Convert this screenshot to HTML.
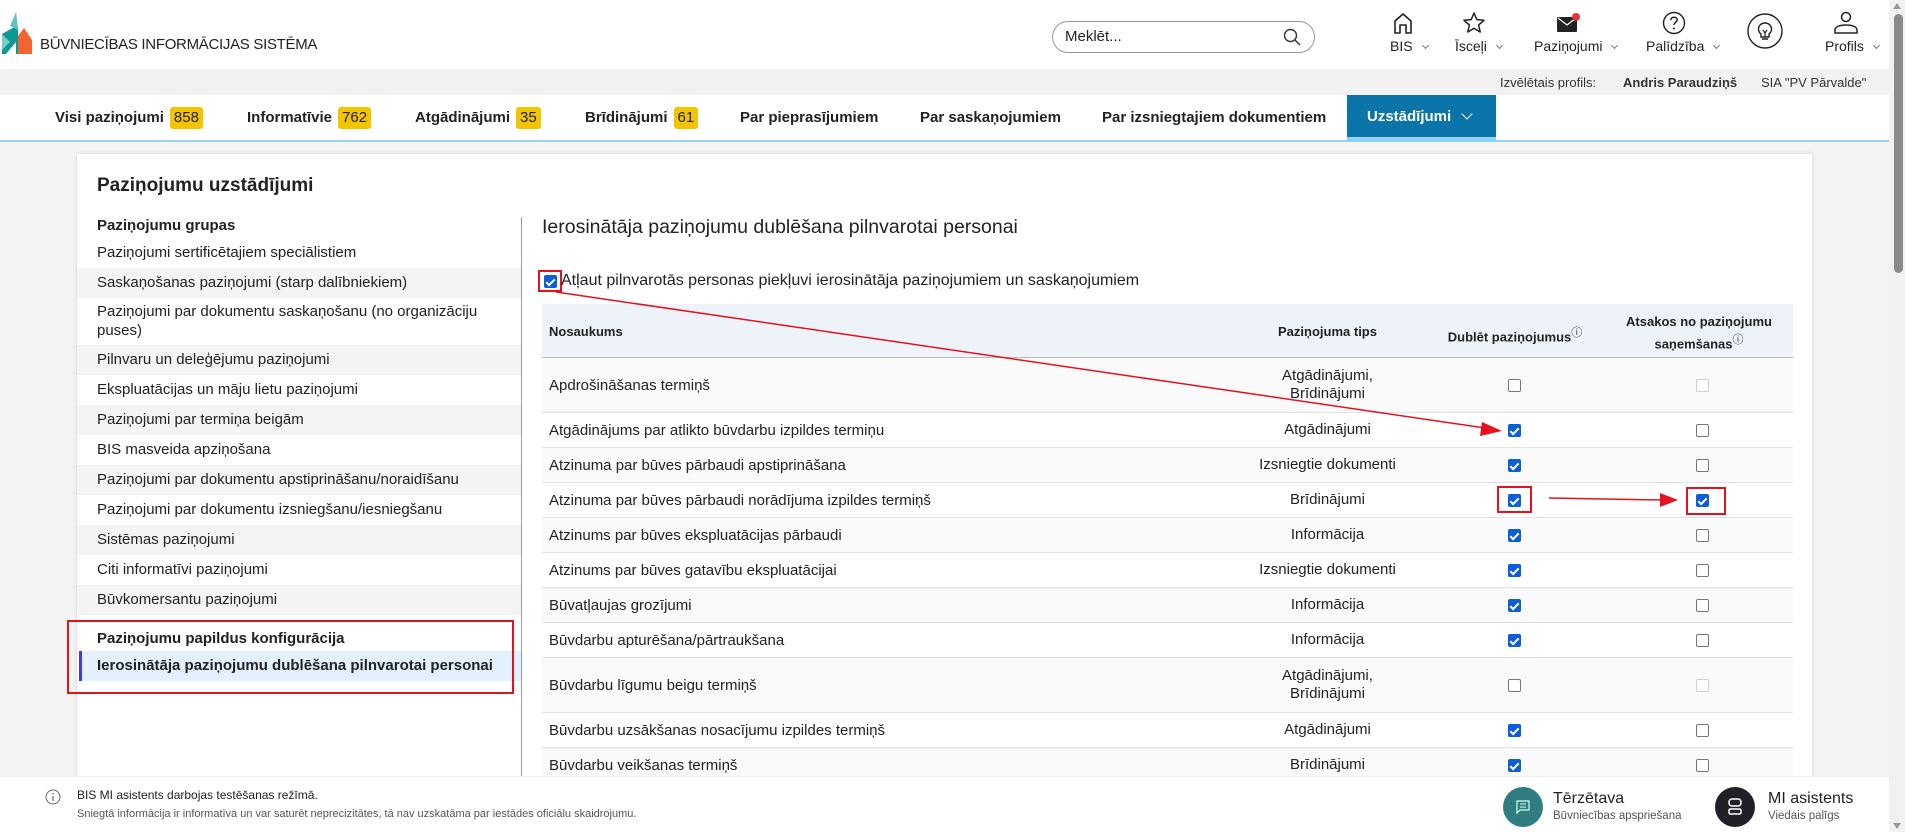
<!DOCTYPE html>
<html style="width:1905px;height:832px;overflow:hidden"><head><meta charset="utf-8">
<style>
*{box-sizing:border-box;margin:0;padding:0}
body{width:1905px;height:832px;overflow:hidden;position:relative;background:#f4f4f4;font-family:"Liberation Sans",Arial,sans-serif;color:#222}
.a{position:absolute}
.hdr{left:0;top:0;width:1889px;height:69px;background:#fff}
.strip{left:0;top:69px;width:1889px;height:26px;background:#f2f2f2;font-size:13px;color:#333}
.tabs{left:0;top:95px;width:1889px;height:47px;background:#fff;border-bottom:2px solid #9fd3ee}
.tab{position:absolute;top:0;height:45px;line-height:45px;font-size:15px;font-weight:bold;color:#222;white-space:nowrap}
.badge{display:inline-block;background:#f2c500;border-radius:3px;padding:0 4px;height:22px;line-height:22px;margin-left:6px;font-weight:normal;font-size:15px}
.nav{position:absolute;top:0;text-align:center;font-size:14px;color:#222}
.nav .lbl{position:absolute;top:38px;white-space:nowrap}
.chev{display:inline-block;width:5px;height:5px;border-right:1px solid #777;border-bottom:1px solid #777;transform:rotate(45deg);margin-left:10px;position:relative;top:-3px}
.card{left:77px;top:154px;width:1735px;height:678px;background:#fff;box-shadow:0 0 4px rgba(0,0,0,.15)}
.si{position:absolute;left:77px;width:444px;padding-left:20px;font-size:15px;color:#222;line-height:30px;height:30px}
.g{background:#f4f4f4}
.row{position:absolute;left:542px;width:1251px;border-bottom:1px solid #e3e3e3;font-size:15px;color:#222}
.row .n{position:absolute;left:7px;top:0;height:100%;display:flex;align-items:center}
.row .t{position:absolute;left:688px;width:195px;top:0;height:100%;display:flex;align-items:center;justify-content:center;text-align:center;line-height:18px}
.cb{position:absolute;width:13px;height:13px;border-radius:2px}
.on{background:#0b5ed7}
.on::after{content:"";position:absolute;left:4px;top:1.5px;width:3px;height:7px;border-right:2px solid #fff;border-bottom:2px solid #fff;transform:rotate(45deg)}
.off{background:#fff;border:1px solid #767676}
.dis{background:#fff;border:1px solid #cfcfcf}
.odd{background:#fafafa}
.rb{position:absolute;border:2px solid #e3121b}
</style></head><body>

<div class="a hdr">
  <svg class="a" style="left:2px;top:12px" width="30" height="42" viewBox="0 0 30 42">
    <polygon points="14,0 14,14 0,22 0,42 4,42 14,30 14,42 16,42 16,18" fill="#0e9a94"/>
    <polygon points="14,0 16,18 8,14" fill="#5fc4bf"/>
    <polygon points="0,22 8,30 0,38" fill="#78cfca"/>
    <polygon points="16,16 16,42 30,42 30,28 22,16" fill="#f26430"/>
    <polygon points="16,16 22,16 16,24" fill="#fff"/>
  </svg>
  <div class="a" style="left:40px;top:36px;font-size:15px;letter-spacing:-0.3px;color:#222;white-space:nowrap">BŪVNIECĪBAS INFORMĀCIJAS SISTĒMA</div>
  <div class="a" style="left:1052px;top:21px;width:263px;height:32px;border:1px solid #999;border-radius:16px;font-size:15px;line-height:30px;padding-left:12px;color:#222">Meklēt...</div>
  <svg class="a" style="left:1283px;top:28px" width="18" height="18" viewBox="0 0 18 18"><circle cx="7.5" cy="7.5" r="6" fill="none" stroke="#333" stroke-width="1.4"/><line x1="12" y1="12" x2="17" y2="17" stroke="#333" stroke-width="1.4"/></svg>

  <svg class="a" style="left:1392px;top:12px" width="22" height="22" viewBox="0 0 22 22"><path d="M3 21V9L11 2L19 9V21H14V13H8V21Z" fill="none" stroke="#222" stroke-width="1.6" stroke-linejoin="round"/></svg>
  <div class="nav" style="left:1390px"><span class="lbl" style="left:0">BIS<span class="chev"></span></span></div>
  <svg class="a" style="left:1462px;top:11px" width="24" height="24" viewBox="0 0 24 24"><path d="M12 2L14.8 8.6L22 9.3L16.6 14L18.2 21L12 17.3L5.8 21L7.4 14L2 9.3L9.2 8.6Z" fill="none" stroke="#222" stroke-width="1.5" stroke-linejoin="round"/></svg>
  <div class="nav" style="left:1455px"><span class="lbl" style="left:0">Īsceļi<span class="chev"></span></span></div>
  <svg class="a" style="left:1556px;top:12px" width="26" height="22" viewBox="0 0 26 22"><rect x="1" y="5" width="20" height="15" rx="1" fill="#222"/><path d="M2 6L11 13L20 6" fill="none" stroke="#fff" stroke-width="1.2"/><circle cx="20" cy="5" r="4" fill="#e0323f"/></svg>
  <div class="nav" style="left:1534px"><span class="lbl" style="left:0">Paziņojumi<span class="chev"></span></span></div>
  <svg class="a" style="left:1662px;top:11px" width="24" height="24" viewBox="0 0 24 24"><circle cx="12" cy="12" r="10.5" fill="none" stroke="#222" stroke-width="1.4"/><path d="M8.8 9.2C8.8 7.3 10.2 6.2 12 6.2C13.8 6.2 15.2 7.3 15.2 9C15.2 11 12 11.3 12 14" fill="none" stroke="#222" stroke-width="1.5"/><circle cx="12" cy="17.5" r="1" fill="#222"/></svg>
  <div class="nav" style="left:1646px"><span class="lbl" style="left:0">Palīdzība<span class="chev"></span></span></div>
  <svg class="a" style="left:1747px;top:13px" width="36" height="36" viewBox="0 0 36 36"><circle cx="18" cy="18" r="17" fill="none" stroke="#222" stroke-width="1.4"/><path d="M14 21C12 19.5 11.5 17.5 11.5 16C11.5 12.5 14.5 10 18 10C21.5 10 24.5 12.5 24.5 16C24.5 17.5 24 19.5 22 21V24H14Z M15 26H21" fill="none" stroke="#222" stroke-width="1.4"/><path d="M16 17L18 20L20 17M18 20V24" fill="none" stroke="#222" stroke-width="1.2"/></svg>
  <svg class="a" style="left:1833px;top:11px" width="26" height="24" viewBox="0 0 26 24"><circle cx="13" cy="6" r="4.5" fill="none" stroke="#222" stroke-width="1.5"/><path d="M2 22V19C2 16 6 14 13 14C20 14 24 16 24 19V22Z" fill="none" stroke="#222" stroke-width="1.5"/></svg>
  <div class="nav" style="left:1825px"><span class="lbl" style="left:0">Profils<span class="chev"></span></span></div>
</div>

<div class="a strip">
  <span class="a" style="left:1500px;top:6px">Izvēlētais profils:</span>
  <span class="a" style="left:1623px;top:6px;font-weight:bold">Andris Paraudziņš</span>
  <span class="a" style="left:1761px;top:6px">SIA "PV Pārvalde"</span>
</div>

<div class="a tabs">
  <div class="tab" style="left:55px">Visi paziņojumi<span class="badge">858</span></div>
  <div class="tab" style="left:247px">Informatīvie<span class="badge">762</span></div>
  <div class="tab" style="left:415px">Atgādinājumi<span class="badge">35</span></div>
  <div class="tab" style="left:585px">Brīdinājumi<span class="badge">61</span></div>
  <div class="tab" style="left:740px">Par pieprasījumiem</div>
  <div class="tab" style="left:920px">Par saskaņojumiem</div>
  <div class="tab" style="left:1102px">Par izsniegtajiem dokumentiem</div>
  <div class="tab" style="left:1347px;width:149px;background:#0b75aa;color:#fff;padding-left:20px;border-bottom:5px solid #8ed3f5;height:47px;line-height:43px">Uzstādījumi<span class="chev" style="border-color:#fff;width:8px;height:8px;margin-left:12px"></span></div>
</div>

<div class="a card"></div>
<div class="a" style="left:97px;top:175px;font-size:19px;font-weight:bold;color:#222">Paziņojumu uzstādījumi</div>
<div class="a" style="left:521px;top:217px;width:1px;height:560px;background:#999"></div>

<div class="a" style="left:97px;top:217px;font-size:15px;font-weight:bold">Paziņojumu grupas</div>
<div class="si" style="top:238px">Paziņojumi sertificētajiem speciālistiem</div>
<div class="si g" style="top:268px">Saskaņošanas paziņojumi (starp dalībniekiem)</div>
<div class="si" style="top:298px;height:47px;line-height:19px;padding-top:4px;padding-right:10px">Paziņojumi par dokumentu saskaņošanu (no organizāciju puses)</div>
<div class="si g" style="top:345px">Pilnvaru un deleģējumu paziņojumi</div>
<div class="si" style="top:375px">Ekspluatācijas un māju lietu paziņojumi</div>
<div class="si g" style="top:405px">Paziņojumi par termiņa beigām</div>
<div class="si" style="top:435px">BIS masveida apziņošana</div>
<div class="si g" style="top:465px">Paziņojumi par dokumentu apstiprināšanu/noraidīšanu</div>
<div class="si" style="top:495px">Paziņojumi par dokumentu izsniegšanu/iesniegšanu</div>
<div class="si g" style="top:525px">Sistēmas paziņojumi</div>
<div class="si" style="top:555px">Citi informatīvi paziņojumi</div>
<div class="si g" style="top:585px">Būvkomersantu paziņojumi</div>
<div class="a" style="left:97px;top:630px;font-size:15px;font-weight:bold">Paziņojumu papildus konfigurācija</div>
<div class="si" style="top:651px;left:79px;width:442px;background:#e3f0fd;border-left:3px solid #3b3be8;padding-left:15px;font-weight:bold">Ierosinātāja paziņojumu dublēšana pilnvarotai personai</div>
<div class="rb" style="left:67px;top:620px;width:447px;height:74px"></div>

<div class="a" style="left:542px;top:216px;font-size:19.5px;color:#222">Ierosinātāja paziņojumu dublēšana pilnvarotai personai</div>
<div class="cb on" style="left:544px;top:275px"></div>
<div class="rb" style="left:538px;top:270px;width:24px;height:22px"></div>
<div class="a" style="left:561px;top:272px;font-size:16px">Atļaut pilnvarotās personas piekļuvi ierosinātāja paziņojumiem un saskaņojumiem</div>

<div class="a" style="left:542px;top:304px;width:1251px;height:54px;background:#eef3fa;border-bottom:1px solid #bbb;font-size:13px;font-weight:bold">
  <span class="a" style="left:7px;top:20px">Nosaukums</span>
  <span class="a" style="left:688px;width:195px;top:20px;text-align:center">Paziņojuma tips</span>
  <span class="a" style="left:883px;width:180px;top:20px;text-align:center">Dublēt paziņojumus<sup style="font-weight:normal;font-size:11px">ⓘ</sup></span>
  <span class="a" style="left:1063px;width:188px;top:8px;text-align:center;line-height:19px">Atsakos no paziņojumu saņemšanas<sup style="font-weight:normal;font-size:11px">ⓘ</sup></span>
</div>

<div class="row odd" style="top:358px;height:55px"><span class="n">Apdrošināšanas termiņš</span><span class="t">Atgādinājumi,<br>Brīdinājumi</span><span class="cb off" style="left:966px;top:21px"></span><span class="cb dis" style="left:1154px;top:21px"></span></div>
<div class="row" style="top:413px;height:35px"><span class="n">Atgādinājums par atlikto būvdarbu izpildes termiņu</span><span class="t">Atgādinājumi</span><span class="cb on" style="left:966px;top:11px"></span><span class="cb off" style="left:1154px;top:11px"></span></div>
<div class="row odd" style="top:448px;height:35px"><span class="n">Atzinuma par būves pārbaudi apstiprināšana</span><span class="t">Izsniegtie dokumenti</span><span class="cb on" style="left:966px;top:11px"></span><span class="cb off" style="left:1154px;top:11px"></span></div>
<div class="row" style="top:483px;height:35px"><span class="n">Atzinuma par būves pārbaudi norādījuma izpildes termiņš</span><span class="t">Brīdinājumi</span><span class="cb on" style="left:966px;top:11px"></span><span class="cb on" style="left:1154px;top:11px"></span></div>
<div class="row odd" style="top:518px;height:35px"><span class="n">Atzinums par būves ekspluatācijas pārbaudi</span><span class="t">Informācija</span><span class="cb on" style="left:966px;top:11px"></span><span class="cb off" style="left:1154px;top:11px"></span></div>
<div class="row" style="top:553px;height:35px"><span class="n">Atzinums par būves gatavību ekspluatācijai</span><span class="t">Izsniegtie dokumenti</span><span class="cb on" style="left:966px;top:11px"></span><span class="cb off" style="left:1154px;top:11px"></span></div>
<div class="row odd" style="top:588px;height:35px"><span class="n">Būvatļaujas grozījumi</span><span class="t">Informācija</span><span class="cb on" style="left:966px;top:11px"></span><span class="cb off" style="left:1154px;top:11px"></span></div>
<div class="row" style="top:623px;height:35px"><span class="n">Būvdarbu apturēšana/pārtraukšana</span><span class="t">Informācija</span><span class="cb on" style="left:966px;top:11px"></span><span class="cb off" style="left:1154px;top:11px"></span></div>
<div class="row odd" style="top:658px;height:55px"><span class="n">Būvdarbu līgumu beigu termiņš</span><span class="t">Atgādinājumi,<br>Brīdinājumi</span><span class="cb off" style="left:966px;top:21px"></span><span class="cb dis" style="left:1154px;top:21px"></span></div>
<div class="row" style="top:713px;height:35px"><span class="n">Būvdarbu uzsākšanas nosacījumu izpildes termiņš</span><span class="t">Atgādinājumi</span><span class="cb on" style="left:966px;top:11px"></span><span class="cb off" style="left:1154px;top:11px"></span></div>
<div class="row odd" style="top:748px;height:35px"><span class="n">Būvdarbu veikšanas termiņš</span><span class="t">Brīdinājumi</span><span class="cb on" style="left:966px;top:11px"></span><span class="cb off" style="left:1154px;top:11px"></span></div>

<div class="rb" style="left:1497px;top:486px;width:35px;height:27px"></div>
<div class="rb" style="left:1686px;top:487px;width:40px;height:28px"></div>
<svg class="a" style="left:0;top:0" width="1905" height="832">
  <line x1="556" y1="292" x2="1485" y2="428" stroke="#e3121b" stroke-width="1.5"/>
  <polygon points="1502,431 1482,422 1480,436" fill="#e3121b"/>
  <line x1="1549" y1="498" x2="1662" y2="500" stroke="#e3121b" stroke-width="1.5"/>
  <polygon points="1678,500 1660,493 1660,507" fill="#e3121b"/>
</svg>

<div class="a" style="left:0;top:776px;width:1889px;height:56px;background:#fff;border-top:1px solid #eee">
  <svg class="a" style="left:45px;top:12px" width="16" height="16" viewBox="0 0 16 16"><circle cx="8" cy="8" r="7" fill="none" stroke="#666" stroke-width="1"/><line x1="8" y1="7" x2="8" y2="12" stroke="#666" stroke-width="1.2"/><circle cx="8" cy="4.5" r="0.8" fill="#666"/></svg>
  <div class="a" style="left:77px;top:11px;font-size:12px;color:#222">BIS MI asistents darbojas testēšanas režīmā.</div>
  <div class="a" style="left:77px;top:31px;font-size:11px;color:#555">Sniegtā informācija ir informatīva un var saturēt neprecizitātes, tā nav uzskatāma par iestādes oficiālu skaidrojumu.</div>
  <div class="a" style="left:1503px;top:10px;width:40px;height:40px;border-radius:50%;background:#2f7d80"></div>
  <svg class="a" style="left:1515px;top:22px" width="16" height="16" viewBox="0 0 16 16"><path d="M2 2H14V11H5L2 14Z" fill="none" stroke="#cfe" stroke-width="1.2"/><path d="M5 5H11M5 8H11" stroke="#cfe" stroke-width="1"/></svg>
  <div class="a" style="left:1553px;top:13px;font-size:16px;color:#222">Tērzētava</div>
  <div class="a" style="left:1553px;top:33px;font-size:11.5px;color:#555">Būvniecības apspriešana</div>
  <div class="a" style="left:1715px;top:10px;width:40px;height:40px;border-radius:50%;background:#221f26"></div>
  <svg class="a" style="left:1726px;top:20px" width="18" height="20" viewBox="0 0 18 20"><rect x="3" y="2" width="12" height="7" rx="3" fill="none" stroke="#fff" stroke-width="1.5"/><rect x="3" y="12" width="12" height="5" rx="1.5" fill="none" stroke="#fff" stroke-width="1.5"/></svg>
  <div class="a" style="left:1768px;top:13px;font-size:16px;color:#222">MI asistents</div>
  <div class="a" style="left:1768px;top:33px;font-size:11.5px;color:#555">Viedais palīgs</div>
</div>

<div class="a" style="left:1889px;top:0;width:16px;height:832px;background:#f1f1f1"></div>
<div class="a" style="left:1894px;top:14px;width:9px;height:259px;border-radius:5px;background:#8a8a8a"></div>
<svg class="a" style="left:1889px;top:0" width="16" height="832"><polygon points="4,9 12,9 8,3" fill="#999"/><polygon points="4,823 12,823 8,829" fill="#999"/></svg>
</body></html>
